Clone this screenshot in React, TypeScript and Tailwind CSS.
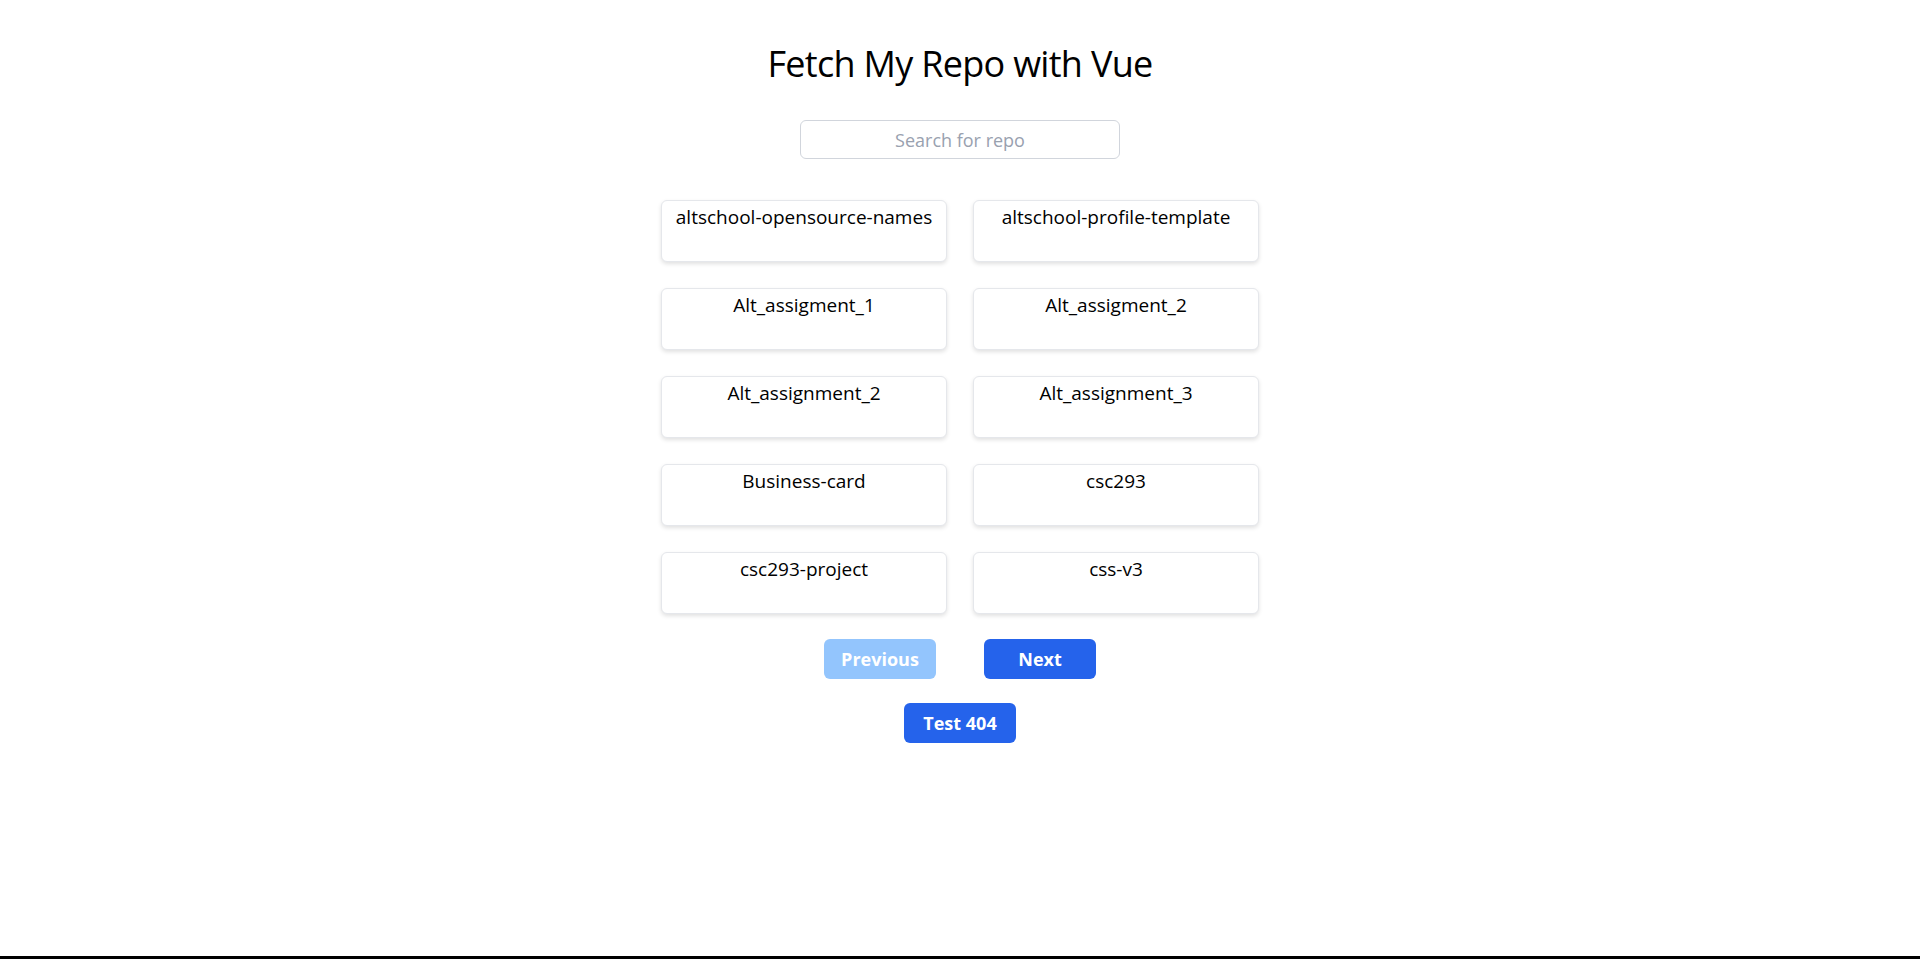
import React, { useState } from "react";

const repos: string[] = [
  "altschool-opensource-names",
  "altschool-profile-template",
  "Alt_assigment_1",
  "Alt_assigment_2",
  "Alt_assignment_2",
  "Alt_assignment_3",
  "Business-card",
  "csc293",
  "csc293-project",
  "css-v3",
];

const RepoCard = ({ name }: { name: string }): React.ReactElement => (
  <div className="h-[62px] rounded-md border border-gray-200 bg-white pt-[2px] text-center text-[19px] text-black shadow-[0_2px_4px_rgba(0,0,0,0.12)]">
    {name}
  </div>
);

const App = (): React.ReactElement => {
  const [query, setQuery] = useState("");

  const filtered = repos.filter((r) =>
    r.toLowerCase().includes(query.toLowerCase())
  );

  return (
    <div
      className="flex min-h-screen w-full flex-col bg-white"
      style={{ fontFamily: '"Open Sans", "Noto Sans", sans-serif' }}
    >
      <div className="flex flex-grow flex-col items-center">
        <h1 className="mt-[44px] text-4xl font-normal tracking-[-0.7px] text-black">
          Fetch My Repo with Vue
        </h1>
        <input
          value={query}
          onChange={(e) => setQuery(e.target.value)}
          placeholder="Search for repo"
          className="mt-[36px] h-[39px] w-[320px] rounded-md border border-gray-300 text-center text-lg outline-none placeholder:text-gray-400"
        />
        <div className="mt-[41px] grid w-[598px] grid-cols-2 gap-x-[26px] gap-y-[26px]">
          {filtered.map((r) => (
            <RepoCard key={r} name={r} />
          ))}
        </div>
        <div className="mt-[25px] flex gap-[48px]">
          <button className="h-[40px] w-[112px] rounded-md bg-[#93c5fd] text-lg font-bold text-white">
            Previous
          </button>
          <button className="h-[40px] w-[112px] rounded-md bg-[#2563eb] text-lg font-bold text-white">
            Next
          </button>
        </div>
        <button className="mt-[24px] h-[40px] w-[112px] rounded-md bg-[#2563eb] text-lg font-bold text-white">
          Test 404
        </button>
      </div>
      <div className="h-[3px] w-full bg-black" />
    </div>
  );
};

export default App;
